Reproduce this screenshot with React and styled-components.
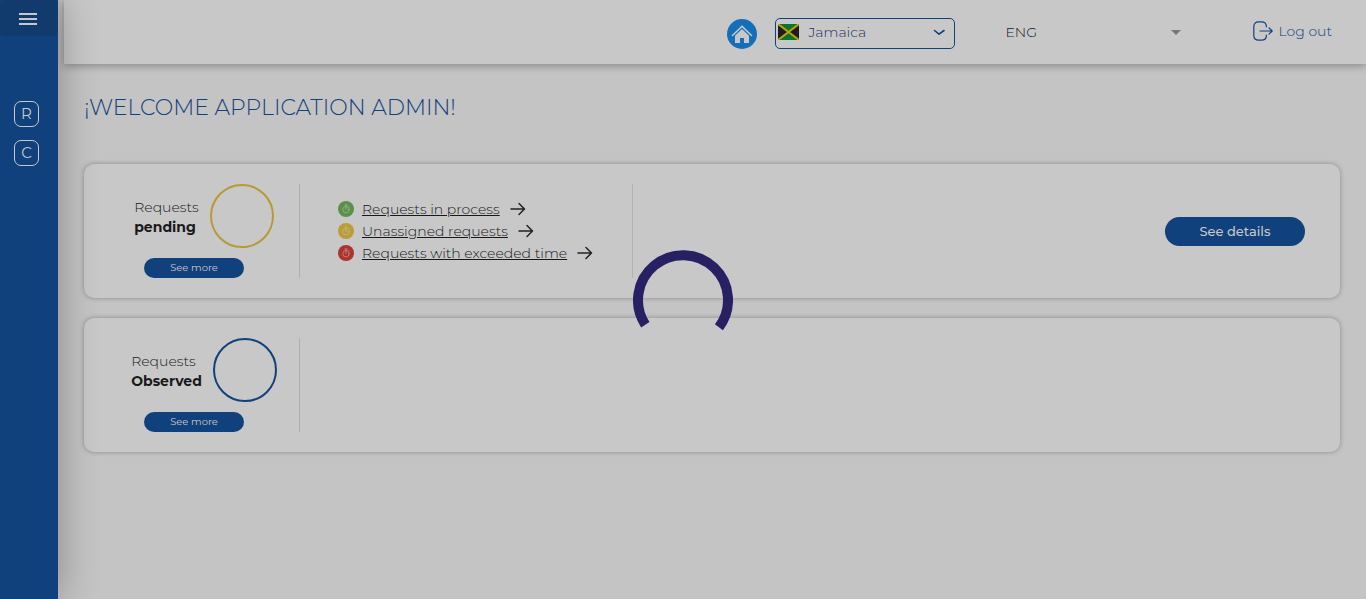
import React from "react";
import styled, { createGlobalStyle } from "styled-components";

const blue = "#11417c";
const surface = "#c8c8c8";

const GlobalStyle = createGlobalStyle`
  *, *::before, *::after { box-sizing: border-box; }
  body {
    margin: 0;
    background: #c4c4c4;
    color: #18181b;
    font-family: Montserrat, Inter, sans-serif;
    font-size: 14px;
    font-weight: 300;
    line-height: 20px;
  }
  button, select { font: inherit; color: inherit; }
`;

const Shell = styled.div`
  display: flex;
  min-height: 100vh;
`;

const Sidebar = styled.nav`
  z-index: 1;
  flex: none;
  width: 58px;
  display: flex;
  flex-direction: column;
  align-items: stretch;
  background: ${blue};
  box-shadow: 0 0 40px rgba(0, 0, 0, 0.32);
`;

const MenuButton = styled.button`
  display: flex;
  align-items: center;
  justify-content: center;
  height: 36px;
  margin-bottom: 65px;
  padding: 2px 2px 0 0;
  border: 0;
  border-radius: 5px;
  background: #103b6c;
  color: ${surface};
`;

const NavList = styled.div`
  display: flex;
  flex-direction: column;
  gap: 13px;
  padding-left: 14px;
`;

const NavLink = styled.a`
  display: flex;
  align-items: center;
  justify-content: center;
  width: 25px;
  height: 26px;
  border: 1px solid ${surface};
  border-radius: 7px;
  color: ${surface};
  font-size: 15px;
  font-weight: 400;
  text-decoration: none;
`;

const Page = styled.div`
  flex: 1;
  min-width: 0;
`;

const Header = styled.header`
  display: flex;
  align-items: center;
  justify-content: flex-end;
  height: 64px;
  margin-left: 6px;
  padding-right: 34px;
  background: ${surface};
  box-shadow: 0 2px 8px rgba(0, 0, 0, 0.3);
`;

const HomeLink = styled.a`
  display: flex;
  margin: 4px 18px 0 0;
`;

const CountryField = styled.label`
  display: flex;
  align-items: center;
  width: 180px;
  height: 31px;
  margin: 2px 50px 0 0;
  padding: 0 8px 2px 2px;
  border: 1px solid ${blue};
  border-radius: 5px;
  color: #1c2c54;
`;

const LanguageField = styled.label`
  display: flex;
  align-items: center;
  width: 176px;
  margin-right: 72px;
`;

const PlainSelect = styled.select`
  flex: 1;
  min-width: 0;
  padding: 0;
  border: 0;
  outline: 0;
  appearance: none;
  background: transparent;
  text-indent: ${(p) => (p.$inset ? "9px" : "0")};
`;

const LogoutLink = styled.a`
  display: flex;
  align-items: center;
  gap: 5px;
  padding-bottom: 2px;
  color: ${blue};
  text-decoration: none;
`;

const Main = styled.main`
  padding: 29px 26px;
`;

const Title = styled.h1`
  margin: 0 0 41px;
  color: ${blue};
  font-size: 22px;
  font-weight: 300;
  line-height: 30px;
`;

const Cards = styled.div`
  display: flex;
  flex-direction: column;
  gap: 20px;
`;

const Card = styled.section`
  display: grid;
  grid-template-columns: 216px 333px 1fr;
  padding: 20px 0;
  border-radius: 10px;
  background: ${surface};
  box-shadow: 0 0 5px rgba(0, 0, 0, 0.3);
`;

const Summary = styled.div`
  display: flex;
  flex-direction: column;
  align-items: center;
  gap: 10px;
  padding-left: 25px;
  border-right: 1px solid #aeaeae;
`;

const SummaryTop = styled.div`
  display: flex;
  align-items: center;
  gap: 11px;
`;

const SummaryLabel = styled.div`
  display: flex;
  flex-direction: column;
  padding-top: 2px;

  strong {
    font-weight: 700;
  }
`;

const Ring = styled.div`
  width: 64px;
  height: 64px;
  border: 2px solid ${(p) => p.$color};
  border-radius: 50%;
`;

const PillButton = styled.button`
  display: flex;
  align-items: center;
  justify-content: center;
  width: ${(p) => (p.$large ? "140px" : "100px")};
  height: ${(p) => (p.$large ? "29px" : "20px")};
  margin-right: ${(p) => (p.$large ? "0" : "20px")};
  padding: 0;
  border: 0;
  border-radius: 15px;
  background: ${blue};
  color: ${surface};
  font-size: ${(p) => (p.$large ? "13px" : "10px")};
  font-weight: ${(p) => (p.$large ? 500 : 400)};
`;

const StatusList = styled.ul`
  display: flex;
  flex-direction: column;
  justify-content: center;
  gap: 2px;
  margin: 0;
  padding: 0 0 0 38px;
  border-right: 1px solid #b2b2b2;
  list-style: none;
`;

const StatusItem = styled.li`
  display: flex;
  align-items: center;
  gap: 8px;
`;

const StatusLink = styled.a`
  margin-right: 2px;
  color: inherit;
`;

const Actions = styled.div`
  display: flex;
  align-items: center;
  justify-content: flex-end;
  padding-right: 35px;
`;

const Loading = styled.div`
  position: fixed;
  inset: 0;
  z-index: 2;
  display: flex;
  align-items: center;
  justify-content: center;
`;

const MenuIcon = () => (
  <svg width="20" height="14" viewBox="0 0 20 14" aria-hidden="true">
    <path d="M1 2h18M1 7h18M1 12h18" stroke="currentColor" strokeWidth="2" />
  </svg>
);

const HomeIcon = () => (
  <svg width="30" height="30" viewBox="0 0 30 30" aria-hidden="true">
    <circle cx="15" cy="15" r="15" fill="#146fb8" />
    <path d="M5.500 16.500 15 7.200l9.500 9.300" fill="none" stroke={surface} strokeWidth="1.600" strokeLinecap="round" strokeLinejoin="round" />
    <path d="M15 10 8 16.800v7.200h5v-5h4v5h5v-7.200z" fill={surface} />
  </svg>
);

const JamaicaFlag = () => (
  <svg width="21" height="16" viewBox="0 0 21 16" aria-hidden="true">
    <path d="M0 0h21v16H0z" fill="#07762e" />
    <path d="M0 0l10.500 8L0 16zM21 0 10.500 8 21 16z" fill="#1e1e1e" />
    <path d="M0 0l21 16M21 0 0 16" stroke="#c1a00c" strokeWidth="2" />
  </svg>
);

const ChevronIcon = () => (
  <svg width="14" height="8" viewBox="0 0 14 8" aria-hidden="true">
    <path d="M2.500 2.500 7 6.200l5-3.700" fill="none" stroke={blue} strokeWidth="1.600" strokeLinecap="round" strokeLinejoin="round" />
  </svg>
);

const CaretIcon = () => (
  <svg width="10" height="5" viewBox="0 0 10 5" aria-hidden="true">
    <path d="M0 0h10L5 5z" fill="#797979" />
  </svg>
);

const LogoutIcon = () => (
  <svg width="20" height="20" viewBox="0 0 20 20" fill="none" stroke={blue} strokeWidth="1.200" strokeLinecap="round" strokeLinejoin="round" aria-hidden="true">
    <path d="M13.400 5.800Q13.400.8 8.400.8H5.800Q.8.8.8 5.800v8.400q0 5 5 5h2.600q5 0 5-5" />
    <path d="M7 10h12.200M16 6.800 19.200 10 16 13.200" />
  </svg>
);

const TimerIcon = ({ color }) => (
  <svg width="16" height="16" viewBox="0 0 16 16" aria-hidden="true">
    <circle cx="8" cy="8" r="8" fill={color} />
    <g fill="none" stroke={surface} strokeWidth="0.800" strokeLinecap="round" opacity="0.600">
      <circle cx="8" cy="8.700" r="3.200" />
      <path d="M8 8.700V4.200M7 4h2M10.800 5.200l.6.600" />
    </g>
  </svg>
);

const ArrowIcon = () => (
  <svg width="16" height="14" viewBox="0 0 16 14" fill="none" stroke="#222226" strokeWidth="1.500" strokeLinecap="round" strokeLinejoin="round" aria-hidden="true">
    <path d="M1 7h13.500M9 1.500 14.500 7 9 12.500" />
  </svg>
);

const SpinnerIcon = () => (
  <svg width="100" height="100" viewBox="0 0 100 100" aria-hidden="true">
    <path d="M12.300 74.700A45 45 0 1 1 85.900 77.300" fill="none" stroke="#272163" strokeWidth="10" />
  </svg>
);

const requestStates = [
  { label: "Requests in process", color: "#5a9148" },
  { label: "Unassigned requests", color: "#ba9d34" },
  { label: "Requests with exceeded time", color: "#ad332e" },
];

function RequestSummary({ state, color }) {
  return (
    <Summary>
      <SummaryTop>
        <SummaryLabel>
          <span>Requests</span>
          <strong>{state}</strong>
        </SummaryLabel>
        <Ring $color={color} />
      </SummaryTop>
      <PillButton type="button">See more</PillButton>
    </Summary>
  );
}

export default function App() {
  return (
    <>
      <GlobalStyle />
      <Shell>
        <Sidebar>
          <MenuButton type="button" aria-label="Menu"><MenuIcon /></MenuButton>
          <NavList>
            <NavLink href="#r">R</NavLink>
            <NavLink href="#c">C</NavLink>
          </NavList>
        </Sidebar>
        <Page>
          <Header>
            <HomeLink href="#home" aria-label="Home"><HomeIcon /></HomeLink>
            <CountryField>
              <JamaicaFlag />
              <PlainSelect $inset aria-label="Country"><option>Jamaica</option></PlainSelect>
              <ChevronIcon />
            </CountryField>
            <LanguageField>
              <PlainSelect aria-label="Language"><option>ENG</option></PlainSelect>
              <CaretIcon />
            </LanguageField>
            <LogoutLink href="#logout"><LogoutIcon />Log out</LogoutLink>
          </Header>
          <Main>
            <Title>¡WELCOME APPLICATION ADMIN!</Title>
            <Cards>
              <Card>
                <RequestSummary state="pending" color="#b79a33" />
                <StatusList>
                  {requestStates.map(({ label, color }) => (
                    <StatusItem key={label}>
                      <TimerIcon color={color} />
                      <StatusLink href="#requests">{label}</StatusLink>
                      <ArrowIcon />
                    </StatusItem>
                  ))}
                </StatusList>
                <Actions><PillButton $large type="button">See details</PillButton></Actions>
              </Card>
              <Card>
                <RequestSummary state="Observed" color={blue} />
              </Card>
            </Cards>
          </Main>
        </Page>
      </Shell>
      <Loading role="status" aria-label="Loading"><SpinnerIcon /></Loading>
    </>
  );
}
